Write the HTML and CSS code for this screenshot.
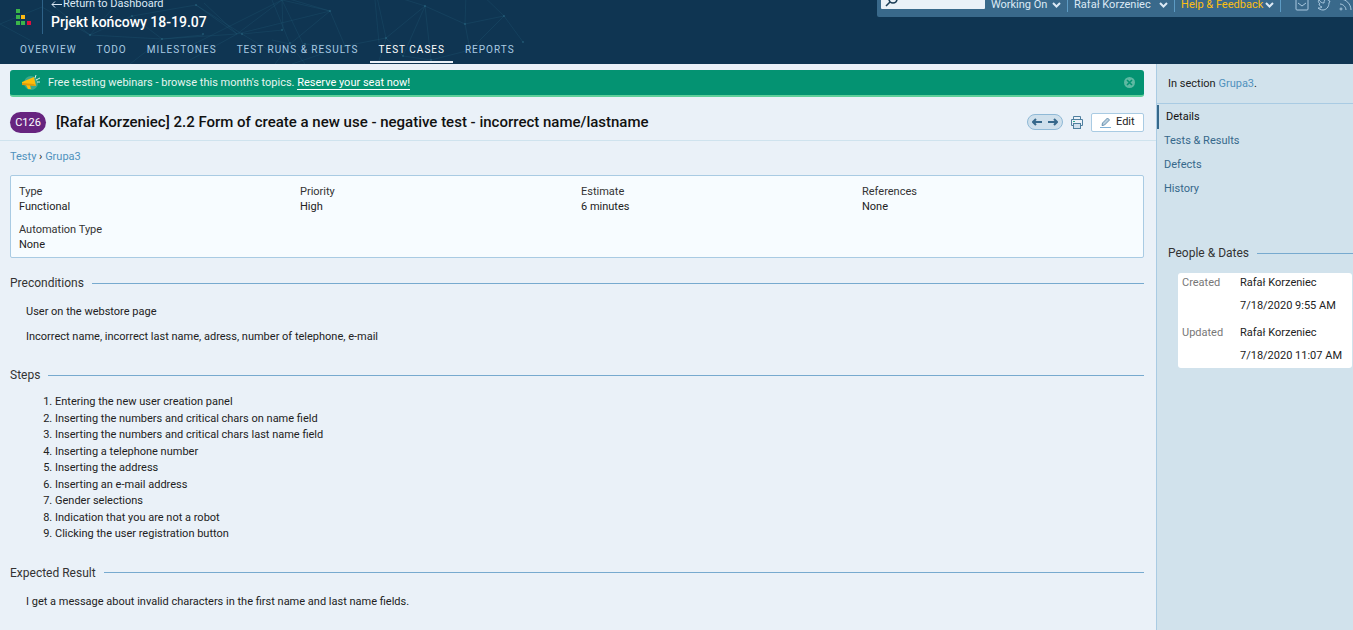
FILE: index.html
```html
<!DOCTYPE html>
<html lang="en">
<head>
<meta charset="utf-8">
<title>Test Case C126</title>
<link rel="stylesheet" href="styles.css">
</head>
<body>
<header class="header">
  <svg class="network" width="540" height="76" viewBox="0 -12 540 76" aria-hidden="true">
    <g fill="none" stroke="#2b6a86" stroke-opacity=".22">
      <path d="M0 24L42 7L90 35L132 16L196 5L237 34L282 0M90 35L130-12M90 35L162 39L237 34L204 3M0 24L52 52M90 35L52 5M132 16L162 39L203 35M162 39L130 64M196 5L242 34L272 52M237 34L190 60M283 30L242 34M283 30L282 0L330 11L290 44L272 40M282 0L303 44L345 46M282 0L190 46M330 11L345 46L292 64M330 11L272-6M330 11L237 34M375-12L386 38L378 64M375 0L379 43M386 38L425 6L403 56L386 38M425 6L465 24L504 16L523 42M425 6L431 60M425 6L375-10M465 24L466-6M465 24L470 50L431 60L403 56M504 16L470 50M504 16L475-12M290 44L275 64M290 44L305 64M272 0L290 44M386 38L345 46"/>
    </g>
    <g fill="#2f7591" fill-opacity=".5">
      <circle cx="90" cy="35" r="1"/><circle cx="132" cy="16" r="1"/><circle cx="162" cy="39" r="1"/><circle cx="196" cy="5" r="1"/><circle cx="203" cy="34" r="1"/><circle cx="242" cy="34" r="1"/><circle cx="282" cy="30" r="1"/><circle cx="330" cy="11" r="1"/><circle cx="290" cy="43" r="1"/><circle cx="305" cy="44" r="1"/><circle cx="345" cy="46" r="1"/><circle cx="386" cy="38" r="1"/><circle cx="425" cy="6" r="1"/><circle cx="403" cy="56" r="1"/><circle cx="465" cy="24" r="1"/><circle cx="504" cy="16" r="1"/><circle cx="523" cy="42" r="1"/><circle cx="431" cy="60" r="1"/>
    </g>
  </svg>
  <div class="header-top">
    <div class="brand">
      <svg class="logo" width="17" height="17" viewBox="0 0 17 17" aria-hidden="true">
        <g fill="#3bb54a"><rect x="1" width="4" height="4"/><rect x="1" y="6" width="4" height="4"/><rect x="1" y="12" width="4" height="4"/><rect x="6" y="12" width="4" height="4"/></g>
        <rect x="6" y="6" width="4" height="4" fill="#fdb913"/><rect x="12" y="12" width="4" height="4" fill="#e0103f"/>
      </svg>
      <div class="project">
        <a class="return" href="#"><svg width="11" height="7" viewBox="0 0 11 7" fill="none" stroke="#dce9f5" aria-hidden="true"><path d="M11 3.5H1M4 .5L1 3.5l3 3"/></svg>Return to Dashboard</a>
        <div class="project-name">Prjekt końcowy 18-19.07</div>
      </div>
    </div>
    <div class="tools">
      <label class="search">
        <svg width="13" height="13" viewBox="0 0 13 13" fill="none" stroke="#1c3d57" stroke-width="1.6" aria-hidden="true"><circle cx="8" cy="5" r="4"/><path d="M5 8L1 12"/></svg>
        <input type="text" aria-label="Search">
      </label>
      <button class="menu working">Working On<svg width="9" height="6" viewBox="0 0 9 6"><path d="M1 1l3.500 3.500L8 1"/></svg></button>
      <button class="menu user">Rafał Korzeniec<svg width="9" height="6" viewBox="0 0 9 6"><path d="M1 1l3.500 3.500L8 1"/></svg></button>
      <button class="menu help">Help &amp; Feedback<svg width="9" height="6" viewBox="0 0 9 6"><path d="M1 1l3.500 3.500L8 1"/></svg></button>
      <div class="social">
        <a href="#" aria-label="Mail"><svg width="14" height="13" viewBox="0 0 14 13"><rect x="1" y="1" width="12" height="11" rx="1"/><path d="M3 5l4 3 4-3"/></svg></a>
        <a href="#" aria-label="Twitter"><svg width="14" height="13" viewBox="0 0 14 13"><path d="M1 10c2 0 3 0 4-1-2-.5-3-2-3-3h1C1 4 1 3 2 2c1 2 3 3 5 3 0-5 4-4 5-2l1 0-1 2c0 4-3 7-6 7-2 0-4-1-5-2z"/></svg></a>
        <a href="#" aria-label="RSS feed"><svg width="14" height="13" viewBox="0 0 14 13"><path d="M1 1c6 0 11 5 11 11M1 6c3 0 6 3 6 6"/><circle cx="2" cy="11" r="1"/></svg></a>
      </div>
    </div>
  </div>
  <nav class="tabs">
    <a href="#">OVERVIEW</a><a href="#">TODO</a><a href="#">MILESTONES</a><a href="#">TEST RUNS &amp; RESULTS</a><a class="active" href="#">TEST CASES</a><a href="#">REPORTS</a>
  </nav>
</header>
<div class="layout">
  <main class="content">
    <div class="banner">
      <svg width="20" height="17" viewBox="0 0 20 17" aria-hidden="true"><circle cx="10" cy="9" r="7" fill="#39a98c"/><path d="M1 8L13 3l2 9-6-1 1 4H7l-2-4H1z" fill="#fdbd0b"/><path d="M1 9v2l14 1-2-2z" fill="#e29b0a"/><path d="M14 4l1-3M15 6l4-2M16 8h3" stroke="#d6efe7" fill="none"/></svg>
      <p>Free testing webinars - browse this month's topics. <a href="#">Reserve your seat now!</a></p>
      <button class="close" aria-label="Close"><svg width="11" height="11" viewBox="0 0 11 11"><circle cx="5.500" cy="5.500" r="5.500" fill="#5eb9a2"/><path d="M3 3l5 5M8 3L3 8" stroke="#049372" stroke-width="1.600"/></svg></button>
    </div>
    <div class="title-row">
      <span class="case-id">C126</span>
      <h1>[Rafał Korzeniec] 2.2 Form of create a new use - negative test - incorrect name/lastname</h1>
      <div class="pager">
        <a href="#" aria-label="Previous"><svg width="10" height="8" viewBox="0 0 10 8"><path d="M10 4H1M4 1L1 4l3 3"/></svg></a>
        <a href="#" aria-label="Next"><svg width="10" height="8" viewBox="0 0 10 8"><path d="M0 4h9M6 1l3 3-3 3"/></svg></a>
      </div>
      <a class="print" href="#" aria-label="Print"><svg width="12" height="13" viewBox="0 0 12 13" fill="none" stroke="#4f7f9f"><path d="M2.500 3.500v-3h7v3M2.500 9.500h-2v-6h11v6h-2"/><rect x="2.500" y="7.500" width="7" height="5" fill="#cfe0ec"/><path d="M2 5.500h2" stroke="#2fae8a"/></svg></a>
      <button class="edit"><svg width="11" height="11" viewBox="0 0 11 11" fill="none" stroke="#6a93b1"><path d="M0 10.500h11" stroke="#7fb0d6"/><path d="M2 8.500l.5-2.500 5-5 2 2-5 5z" fill="#b9cfdf"/></svg>Edit</button>
    </div>
    <div class="crumbs"><a href="#">Testy</a> › <a href="#">Grupa3</a></div>
    <dl class="facts">
      <div><dt>Type</dt><dd>Functional</dd></div>
      <div><dt>Priority</dt><dd>High</dd></div>
      <div><dt>Estimate</dt><dd>6 minutes</dd></div>
      <div><dt>References</dt><dd>None</dd></div>
      <div><dt>Automation Type</dt><dd>None</dd></div>
    </dl>
    <section>
      <h2>Preconditions</h2>
      <div class="text"><p>User on the webstore page</p><p>Incorrect name, incorrect last name, adress, number of telephone, e-mail</p></div>
    </section>
    <section>
      <h2>Steps</h2>
      <ol class="steps">
        <li>Entering the new user creation panel</li>
        <li>Inserting the numbers and critical chars on name field</li>
        <li>Inserting the numbers and critical chars last name field</li>
        <li>Inserting a telephone number</li>
        <li>Inserting the address</li>
        <li>Inserting an e-mail address</li>
        <li>Gender selections</li>
        <li>Indication that you are not a robot</li>
        <li>Clicking the user registration button</li>
      </ol>
    </section>
    <section>
      <h2>Expected Result</h2>
      <div class="text"><p>I get a message about invalid characters in the first name and last name fields.</p></div>
    </section>
  </main>
  <aside class="sidebar">
    <p class="in-section">In section <a href="#">Grupa3</a>.</p>
    <nav class="side-nav">
      <a class="active" href="#">Details</a><a href="#">Tests &amp; Results</a><a href="#">Defects</a><a href="#">History</a>
    </nav>
    <h2>People &amp; Dates</h2>
    <dl class="people">
      <dt>Created</dt><dd><p>Rafał Korzeniec</p><p>7/18/2020 9:55 AM</p></dd>
      <dt>Updated</dt><dd><p>Rafał Korzeniec</p><p>7/18/2020 11:07 AM</p></dd>
    </dl>
  </aside>
</div>
</body>
</html>
```
FILE: styles.css
```css
* { box-sizing: border-box; }
html { overflow: hidden; }
body {
  margin: -12px 0 0;
  min-height: calc(100vh + 12px);
  display: flex;
  flex-direction: column;
  background: #eaf1f8;
  color: #222;
  font: 11px/16px Roboto, "Liberation Sans", sans-serif;
}
a { color: #5091bd; text-decoration: none; }
button { font: inherit; border: 0; background: none; padding: 0; }
h1, h2, p, dl, dd, ol { margin: 0; padding: 0; }
svg { flex: none; display: block; }

.header { position: relative; height: 76px; background: #0f3552; display: flex; flex-direction: column; justify-content: space-between; }
.network { position: absolute; top: 0; left: 0; }
.header-top { position: relative; display: flex; justify-content: space-between; align-items: flex-start; }
.brand { display: flex; height: 46px; }
.logo { margin: 21px 10px 0 15px; }
.project { border-left: 1px solid #2e6288; padding: 8px 0 0 8px; }
.return { display: flex; align-items: center; gap: 1px; color: #dce9f5; }
.project-name { font-size: 14px; line-height: 20px; font-weight: 500; color: #fff; }

.tools { display: flex; align-items: center; height: 29px; padding: 4px 0 0 4px; background: #39698b; border-radius: 0 0 0 2px; overflow: hidden; width: 476px; }
.search { display: flex; align-items: center; align-self: flex-start; width: 105px; height: 17px; background: #eaf1f8; padding-left: 4px; border-radius: 1px; }
.search input { width: 80px; height: 15px; border: 0; background: none; }
.menu { display: flex; align-items: center; justify-content: space-between; height: 14px; color: #dce9f5; padding: 0 6px; border-right: 1px solid #5d9bc4; white-space: nowrap; }
.menu svg { fill: none; stroke: #dce9f5; stroke-width: 2; }
.working { width: 84px; }
.user { width: 108px; }
.help { width: 107px; color: #fdbf11; }
.social { display: flex; gap: 8px; padding-left: 14px; }
.social svg { fill: none; stroke: #a9c8df; }

.tabs { position: relative; display: flex; padding-left: 11px; gap: 3px; }
.tabs a { padding: 0 8px 1px 9px; height: 23px; font-size: 10px; line-height: 20px; letter-spacing: 1px; color: #a9cbe3; white-space: nowrap; border-bottom: 2px solid transparent; }
.tabs { padding-bottom: 1px; }
.tabs .active { color: #fff; border-color: #eaf1f8; }

.layout { flex: 1; display: grid; grid-template-columns: minmax(0, 1fr) 197px; }
.content { padding: 6px 12px 0 10px; }
.banner { display: flex; align-items: center; gap: 7px; height: 27px; padding: 0 9px 0 11px; border-radius: 3px; border-bottom: 2px solid #5fd09a; background: #049372; color: #e6f5f0; }
.banner a { color: #fff; border-bottom: 1px solid #fff; }
.close { margin-left: auto; }

.title-row { display: flex; align-items: center; height: 44px; padding: 7px 12px 0 10px; margin: 0 -12px 0 -10px; border-bottom: 1px solid #cfe3ee; }
.case-id { height: 21px; padding: 0 5px; line-height: 21px; border-radius: 11px; background: #67247f; color: #fff; min-width: 36px; text-align: center; }
h1 { font-size: 15px; line-height: 20px; font-weight: 500; margin-left: 10px; color: #111; flex: 1; white-space: nowrap; }
.pager { display: flex; align-items: center; justify-content: space-between; width: 36px; height: 16px; padding: 0 4px; border: 1px solid #8fb9d6; border-radius: 8px; background: #cfe0ec; }
.pager svg { fill: none; stroke: #36688b; stroke-width: 2; }
.print { margin: 0 8px; }
.edit { display: flex; align-items: center; gap: 5px; width: 53px; height: 19px; padding: 0 8px; border: 1px solid #a9cbe3; border-radius: 2px; background: #fff; color: #222; }

.crumbs { padding: 8px 0 10px; }
.facts { display: grid; grid-template-columns: repeat(4, 1fr); row-gap: 8px; padding: 8px 0 5px 8px; border: 1px solid #a9cbe3; border-radius: 2px; background: #f7fcff; line-height: 15px; margin-bottom: 17px; }
dt { color: #333; }
h2 { display: flex; align-items: center; gap: 8px; font-size: 12px; line-height: 16px; font-weight: 400; color: #333; white-space: nowrap; }
h2::after { content: ""; flex: 1; height: 1px; background: #77aacf; }
.text { padding: 13px 16px 22px; display: grid; gap: 9px; }
section:last-child .text { padding-bottom: 8px; }
.steps { padding: 11px 16px 22px 45px; line-height: 1.5; }

.sidebar { background: #d1e2ec; border-left: 1px solid #a9cbe3; }
.in-section { padding: 12px 11px 11px; border-bottom: 1px solid #a9cbe3; }
.side-nav { display: grid; margin-bottom: 44px; padding-top: 1px; }
.side-nav a { padding-left: 7px; line-height: 24px; color: #36688b; }
.side-nav .active { border-left: 2px solid #36688b; color: #111; }
.sidebar h2 { padding: 0 0 0 11px; }
.people { display: grid; grid-template-columns: 58px 1fr; margin: 12px 1px 0 21px; padding: 2px 4px 4px; row-gap: 11px; background: #fff; border-radius: 3px; }
.people dt { color: #777; }
.people dd { display: grid; gap: 7px; white-space: nowrap; }
```
